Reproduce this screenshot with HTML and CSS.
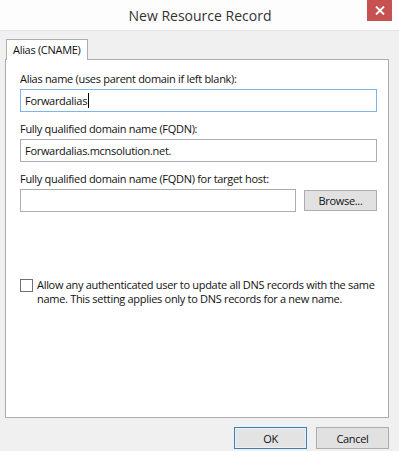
FILE: index.html
```html
<!DOCTYPE html>
<html lang="en">
<head>
  <meta charset="UTF-8">
  <title>New Resource Record</title>
  <link rel="stylesheet" href="styles.css">
</head>
<body>
<div class="window">
  <!-- Title bar -->
  <div class="titlebar">
    <span></span>
    <span class="title">New Resource Record</span>
    <span class="close-wrap">
      <span class="close">
        <svg width="10" height="9" viewBox="0 0 10 9">
          <path d="M1 0.5 L9 8.5 M9 0.5 L1 8.5" stroke="#fff" stroke-width="1.8" fill="none"/>
        </svg>
      </span>
    </span>
  </div>

  <div class="content">
    <div class="tabs">
      <div class="tab">Alias (CNAME)</div>
    </div>

    <!-- Tab page -->
    <div class="panel">
      <div class="field">
        <label>Alias name (uses parent domain if left blank):</label>
        <div class="textbox focused">Forwardalias<span class="caret"></span></div>
      </div>

      <div class="field">
        <label>Fully qualified domain name (FQDN):</label>
        <div class="textbox">Forwardalias.mcnsolution.net.</div>
      </div>

      <div class="field">
        <label>Fully qualified domain name (FQDN) for target host:</label>
        <div class="row">
          <div class="textbox grow"></div>
          <button type="button" class="btn browse">Browse...</button>
        </div>
      </div>

      <div class="check">
        <span class="box"></span>
        <span class="check-text">Allow any authenticated user to update all DNS records with the same name. This setting applies only to DNS records for a new name.</span>
      </div>
    </div>

    <!-- Buttons -->
    <div class="footer">
      <button type="button" class="btn default">OK</button>
      <button type="button" class="btn">Cancel</button>
    </div>
  </div>
</div>
</body>
</html>
```

FILE: styles.css
```css
/* Base */
body {
  margin: 0;
  background: #f0f0f0;
  font-family: "Open Sans", "Noto Sans", Arial, sans-serif;
  font-size: 11px;
  letter-spacing: -0.3px;
  color: #111;
}

.window {
  width: 399px;
  height: 451px;
  overflow: hidden;
}

/* Title bar */
.titlebar {
  height: 31px;
  background: #fdfdfd;
  border-bottom: 1px solid #e3e3e3;
  box-sizing: border-box;
  display: grid;
  grid-template-columns: 1fr auto 1fr;
}

.title {
  font-size: 14px;
  letter-spacing: 0;
  color: #333;
  line-height: 31px;
  padding-left: 1px;
}

.close-wrap {
  display: flex;
  justify-content: flex-end;
  padding-right: 7px;
}

.close {
  width: 25px;
  height: 21px;
  background: #c75050;
  display: flex;
  align-items: center;
  justify-content: center;
}

/* Content */
.content {
  padding: 8px 10px 0 5px;
}

.tabs {
  display: flex;
  padding-left: 1px;
}

.tab {
  width: 82px;
  height: 21px;
  box-sizing: border-box;
  border: 1px solid #adadad;
  border-bottom: none;
  background: #fff;
  padding-left: 6px;
  line-height: 20px;
  position: relative;
  z-index: 1;
  margin-bottom: -1px;
}

.panel {
  height: 359px;
  box-sizing: border-box;
  border: 1px solid #adadad;
  background: #fff;
  padding: 11px 11px 0 14px;
  display: flex;
  flex-direction: column;
  gap: 9px;
}

.field label {
  display: block;
  line-height: 16px;
  margin-bottom: 2px;
}

.textbox {
  height: 23px;
  box-sizing: border-box;
  border: 1px solid #abadb3;
  padding-left: 4px;
  line-height: 21px;
  background: #fff;
}

.textbox.focused {
  border-color: #7eb4ea;
}

.caret {
  display: inline-block;
  width: 1px;
  height: 15px;
  background: #000;
  vertical-align: -3px;
  margin-left: 1px;
}

.row {
  display: flex;
  align-items: center;
  gap: 8px;
}

.grow {
  flex: 1;
}

/* Buttons */
.btn {
  width: 73px;
  height: 22px;
  box-sizing: border-box;
  border: 1px solid #adadad;
  background: #e1e1e1;
  font-family: inherit;
  font-size: 11px;
  letter-spacing: inherit;
  color: #111;
  padding: 0;
}

.browse {
  height: 21px;
}

.btn.default {
  border-color: #3c7fb1;
  background: #e3e3e3;
  box-shadow: inset 0 0 0 1px #e9f2fb;
}

/* Checkbox */
.check {
  display: flex;
  align-items: flex-start;
  gap: 4px;
  margin-top: 57px;
}

.box {
  width: 13px;
  height: 13px;
  box-sizing: border-box;
  border: 1px solid #707070;
  flex: none;
  margin-top: 1px;
}

.check-text {
  line-height: 14px;
}

/* Footer */
.footer {
  display: flex;
  justify-content: flex-end;
  gap: 9px;
  padding-top: 9px;
}
```
